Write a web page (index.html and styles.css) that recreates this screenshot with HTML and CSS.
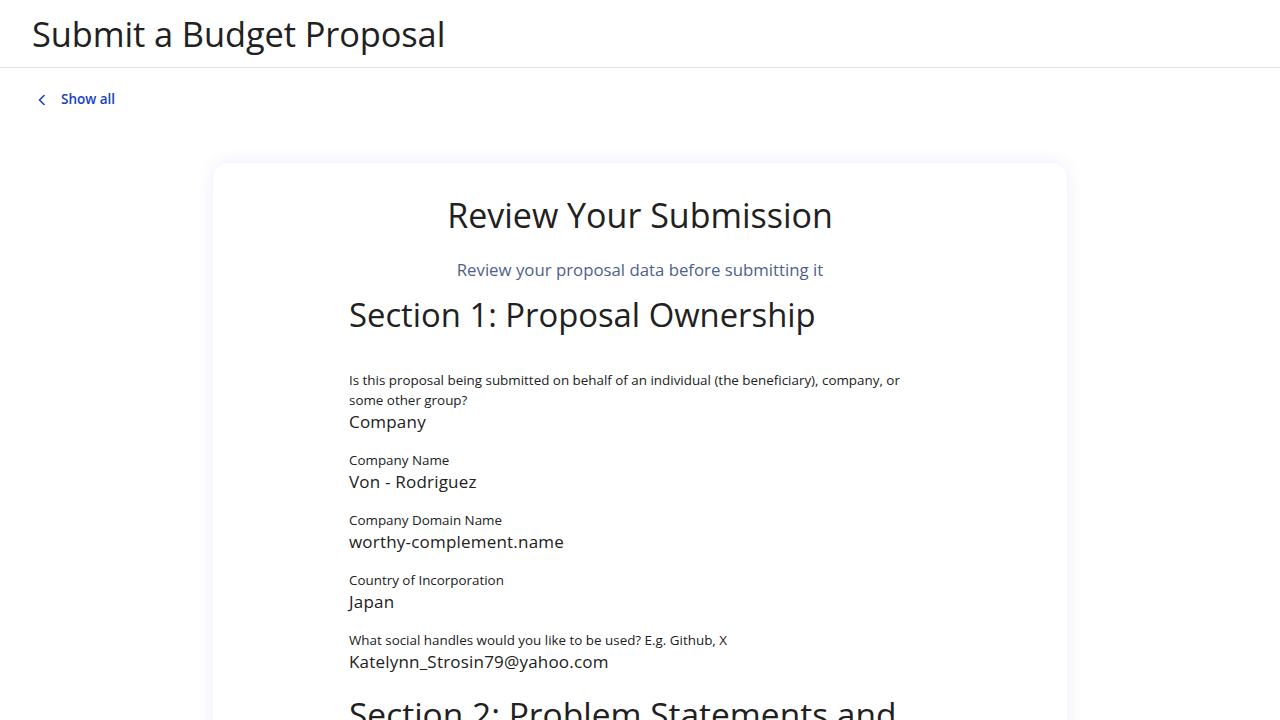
FILE: index.html
```html
<!DOCTYPE html>
<html lang="en">
<head>
<meta charset="utf-8">
<title>Submit a Budget Proposal</title>
<link rel="stylesheet" href="styles.css">
</head>
<body>
<header class="page-header">
  <h1 class="page-title">Submit a Budget Proposal</h1>
</header>
<nav class="back-nav">
  <a class="back-link" href="#">
    <svg class="back-icon" width="12" height="12" viewBox="0 0 12 12" aria-hidden="true"><path d="M8 1.5 3.5 6 8 10.5" fill="none" stroke="currentColor" stroke-width="1.6" stroke-linecap="round" stroke-linejoin="round"/></svg>
    <span>Show all</span>
  </a>
</nav>
<main class="main">
  <section class="card">
    <h2 class="card-title">Review Your Submission</h2>
    <p class="card-subtitle">Review your proposal data before submitting it</p>
    <div class="content">
      <h3 class="section-title">Section 1: Proposal Ownership</h3>
      <div class="fields">
        <div class="field">
          <div class="field-label">Is this proposal being submitted on behalf of an individual (the beneficiary), company, or some other group?</div>
          <div class="field-value">Company</div>
        </div>
        <div class="field">
          <div class="field-label">Company Name</div>
          <div class="field-value">Von - Rodriguez</div>
        </div>
        <div class="field">
          <div class="field-label">Company Domain Name</div>
          <div class="field-value">worthy-complement.name</div>
        </div>
        <div class="field">
          <div class="field-label">Country of Incorporation</div>
          <div class="field-value">Japan</div>
        </div>
        <div class="field">
          <div class="field-label">What social handles would you like to be used? E.g. Github, X</div>
          <div class="field-value">Katelynn_Strosin79@yahoo.com</div>
        </div>
      </div>
      <h3 class="section-title section-title--next">Section 2: Problem Statements and Proposed Solutions</h3>
    </div>
  </section>
</main>
</body>
</html>
```
FILE: styles.css
```css
* { box-sizing: border-box; }
html, body { margin: 0; padding: 0; }
body {
  font-family: "Open Sans", "DejaVu Sans", sans-serif;
  color: #212121;
  background: #ffffff;
  overflow: hidden;
  height: 720px;
}
.page-header {
  height: 68px;
  border-bottom: 1px solid #e2e2e2;
  display: flex;
  align-items: center;
  padding: 0 32px;
}
.page-title {
  margin: 0;
  font-size: 34.4px;
  font-weight: 400;
  letter-spacing: -0.1px;
  color: #212121;
  line-height: 1;
  padding-top: 1px;
}
.back-nav {
  padding: 21px 36px 0;
  height: 95px;
}
.back-link {
  display: inline-flex;
  align-items: center;
  gap: 13px;
  color: #1740c0;
  text-decoration: none;
  font-size: 13.5px;
  font-weight: 600;
}
.back-icon { margin-top: 2px; }
.main {
  display: flex;
  justify-content: center;
}
.card {
  width: 854px;
  background: #fff;
  border-radius: 16px;
  box-shadow: 0 0 16px rgba(90, 100, 230, 0.12);
  padding: 30px 0 40px;
  display: flex;
  flex-direction: column;
  align-items: center;
}
.card-title {
  margin: 0;
  font-size: 34px;
  font-weight: 400;
  line-height: 44px;
  color: #212121;
}
.card-subtitle {
  margin: 21px 0 0;
  font-size: 16.8px;
  line-height: 24px;
  color: #4f5f8c;
}
.content {
  width: 582px;
}
.section-title {
  margin: 11px 0 0;
  font-size: 32.8px;
  font-weight: 400;
  line-height: 44px;
  color: #212121;
}
.fields {
  margin-top: 33px;
  display: flex;
  flex-direction: column;
  gap: 16px;
}
.field-label {
  font-size: 13.4px;
  line-height: 20px;
  color: #212121;
}
.field-value {
  font-size: 17px;
  letter-spacing: 0.2px;
  line-height: 24px;
  color: #212121;
}
.section-title--next {
  margin-top: 18px;
  font-size: 33.5px;
}
```
